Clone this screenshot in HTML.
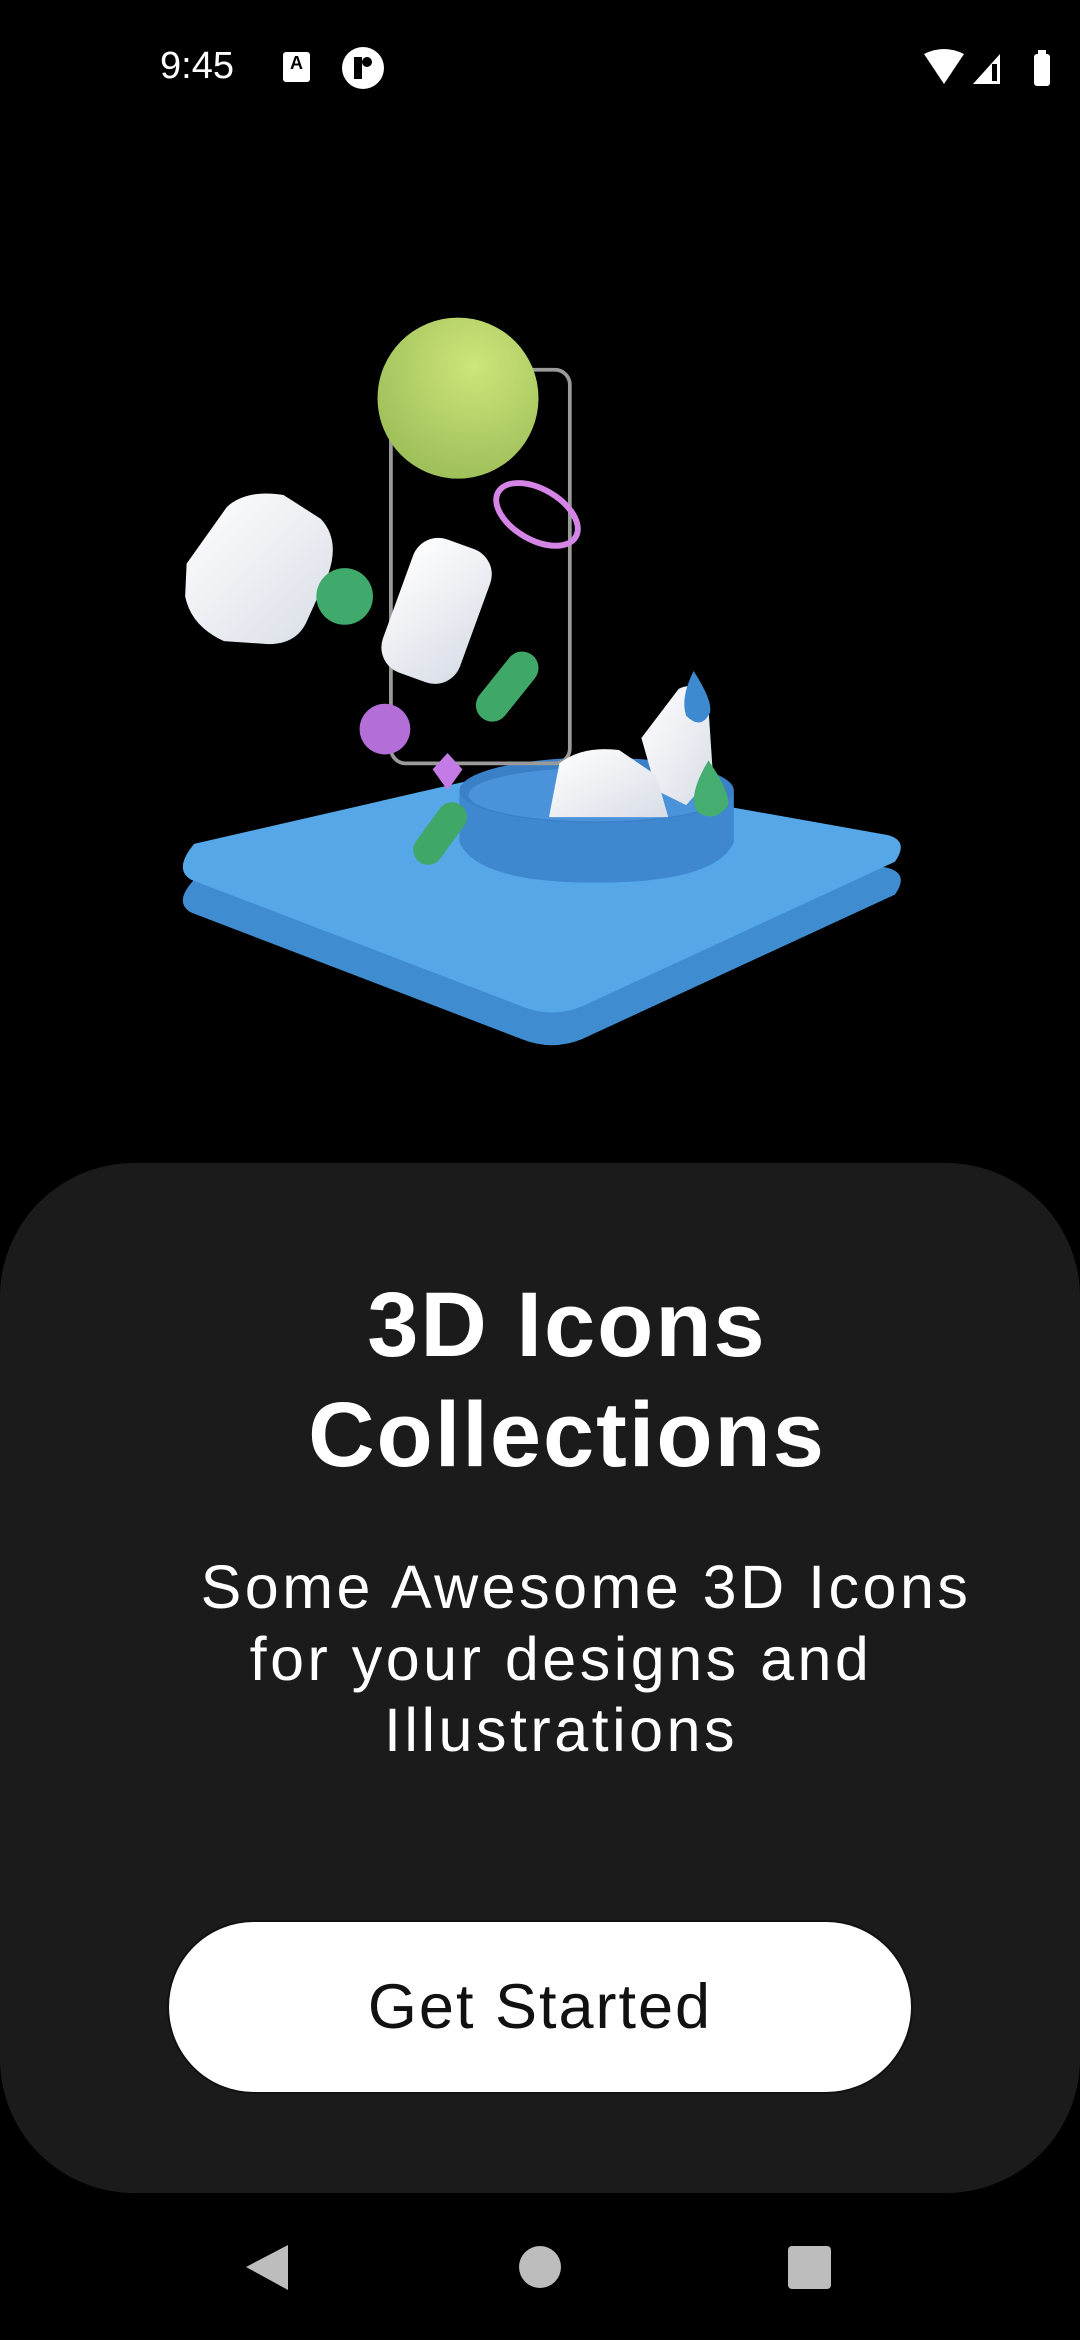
<!DOCTYPE html>
<html><head><meta charset="utf-8"><style>
*{margin:0;padding:0;box-sizing:border-box}
body{width:1080px;height:2340px;background:#000;position:relative;overflow:hidden;font-family:"Liberation Sans",sans-serif;color:#fff}
.abs{position:absolute}
.card{left:0;top:1163px;width:1080px;height:1030px;background:#1b1b1b;border-radius:134px}
.t{left:0;width:1080px;text-align:center;font-weight:bold;font-size:92px;line-height:110px;letter-spacing:2px}
.s{left:0;width:1080px;text-align:center;font-size:61px;line-height:72px;letter-spacing:3.5px}
.btn{left:167px;top:1920px;width:746px;height:174px;background:#fff;border:2px solid #111;border-radius:87px;color:#111;font-size:63px;letter-spacing:2px;text-align:center;line-height:170px}
</style></head><body>
<div class="abs" style="left:160px;top:45px;font-size:38px;line-height:42px">9:45</div>
<div class="abs" style="left:283px;top:52px;width:27px;height:30px;background:#fff;border-radius:3px;color:#000;font-size:18px;font-weight:bold;text-align:center;line-height:22px">A</div>
<svg class="abs" style="left:340px;top:45px" width="46" height="46" viewBox="0 0 46 46"><circle cx="23" cy="23" r="21" fill="#fff"/><rect x="14" y="12" width="8" height="22" fill="#000"/><circle cx="27" cy="17" r="5" fill="#000"/></svg>
<svg class="abs" style="left:920px;top:48px" width="140" height="40" viewBox="0 0 140 40"><path d="M4 6 Q24 -4 44 6 L24 36Z" fill="#fff"/><path d="M53 36 L80 6 L80 36Z" fill="#fff"/><rect x="72" y="16" width="5" height="17" fill="#000"/><rect x="114" y="6" width="16" height="32" rx="3" fill="#fff"/><rect x="118" y="2" width="8" height="5" fill="#fff"/></svg>

<svg class="abs" style="left:0;top:0" width="1080" height="1163" viewBox="0 0 724 780">
<defs>
<radialGradient id="g1" cx="0.6" cy="0.3" r="0.7"><stop offset="0" stop-color="#cde57a"/><stop offset="1" stop-color="#9fc05a"/></radialGradient>
<linearGradient id="w" x1="0" y1="0" x2="1" y2="1"><stop offset="0" stop-color="#fff"/><stop offset="1" stop-color="#d8dde6"/></linearGradient>
</defs>
<path d="M130 590 L330 542 Q350 538 370 542 L595 582 Q610 586 600 600 L390 697 Q370 705 350 697 L128 612 Q116 605 130 590Z" fill="#3f8dd0"/>
<path d="M130 566 L330 520 Q350 516 370 520 L595 560 Q610 564 600 578 L390 675 Q370 683 350 675 L128 590 Q116 583 130 566Z" fill="#55a7e8"/>
<path d="M308 530 L308 565 Q320 592 400 592 Q480 592 492 565 L492 530Z" fill="#3f88d0"/>
<ellipse cx="400" cy="530" rx="92" ry="22" fill="#3a80c6"/>
<ellipse cx="400" cy="533" rx="86" ry="18" fill="#4a92da"/>
<rect x="262" y="248" width="120" height="264" rx="10" fill="none" stroke="#9a9a9a" stroke-width="2.5"/>
<circle cx="307" cy="267" r="54" fill="url(#g1)"/>
<ellipse cx="360" cy="345" rx="30" ry="17" transform="rotate(30 360 345)" fill="none" stroke="#d585e6" stroke-width="4"/>
<path d="M125 378 L152 340 Q165 328 190 332 L215 348 Q228 362 220 385 L205 418 Q198 432 180 432 L150 430 Q128 420 124 400Z" fill="url(#w)"/>
<circle cx="231" cy="400" r="19" fill="#3faa6c"/>
<rect x="265" y="362" width="55" height="95" rx="18" transform="rotate(20 292 410)" fill="url(#w)"/>
<line x1="330" y1="473" x2="350" y2="448" stroke="#3fa868" stroke-width="22" stroke-linecap="round"/>
<circle cx="258" cy="489" r="17" fill="#b36ed8"/>
<path d="M300 505 L310 516 L300 530 L290 516Z" fill="#c57be6"/>
<line x1="287" y1="570" x2="303" y2="548" stroke="#3fa868" stroke-width="20" stroke-linecap="round"/>
<path d="M430 495 L455 462 Q470 455 475 475 L478 520 L460 540 L440 530Z" fill="url(#w)"/>
<path d="M465 450 Q478 470 476 478 Q470 490 460 480 Q456 468 465 450Z" fill="#3d8ad0"/>
<path d="M368 548 L375 512 Q390 500 415 503 L440 520 L448 548Z" fill="url(#w)"/>
<path d="M475 510 Q490 532 488 540 Q480 552 468 545 Q460 535 475 510Z" fill="#45ad6f"/>
</svg>

<div class="abs card"></div>
<div class="abs t" style="top:1270px;padding-left:54px">3D Icons</div>
<div class="abs t" style="top:1380px;padding-left:54px">Collections</div>
<div class="abs s" style="top:1551px;padding-left:92px">Some Awesome 3D Icons</div>
<div class="abs s" style="top:1623px;padding-left:42px">for your designs and</div>
<div class="abs s" style="top:1694px;padding-left:42px">Illustrations</div>
<div class="abs btn">Get Started</div>

<svg class="abs" style="left:0;top:2230px" width="1080" height="80" viewBox="0 0 1080 80"><path d="M288 15 L288 60 L246 37Z" fill="#bdbdbd"/><circle cx="540" cy="37" r="21" fill="#bdbdbd"/><rect x="788" y="16" width="43" height="43" rx="4" fill="#bdbdbd"/></svg>
</body></html>
